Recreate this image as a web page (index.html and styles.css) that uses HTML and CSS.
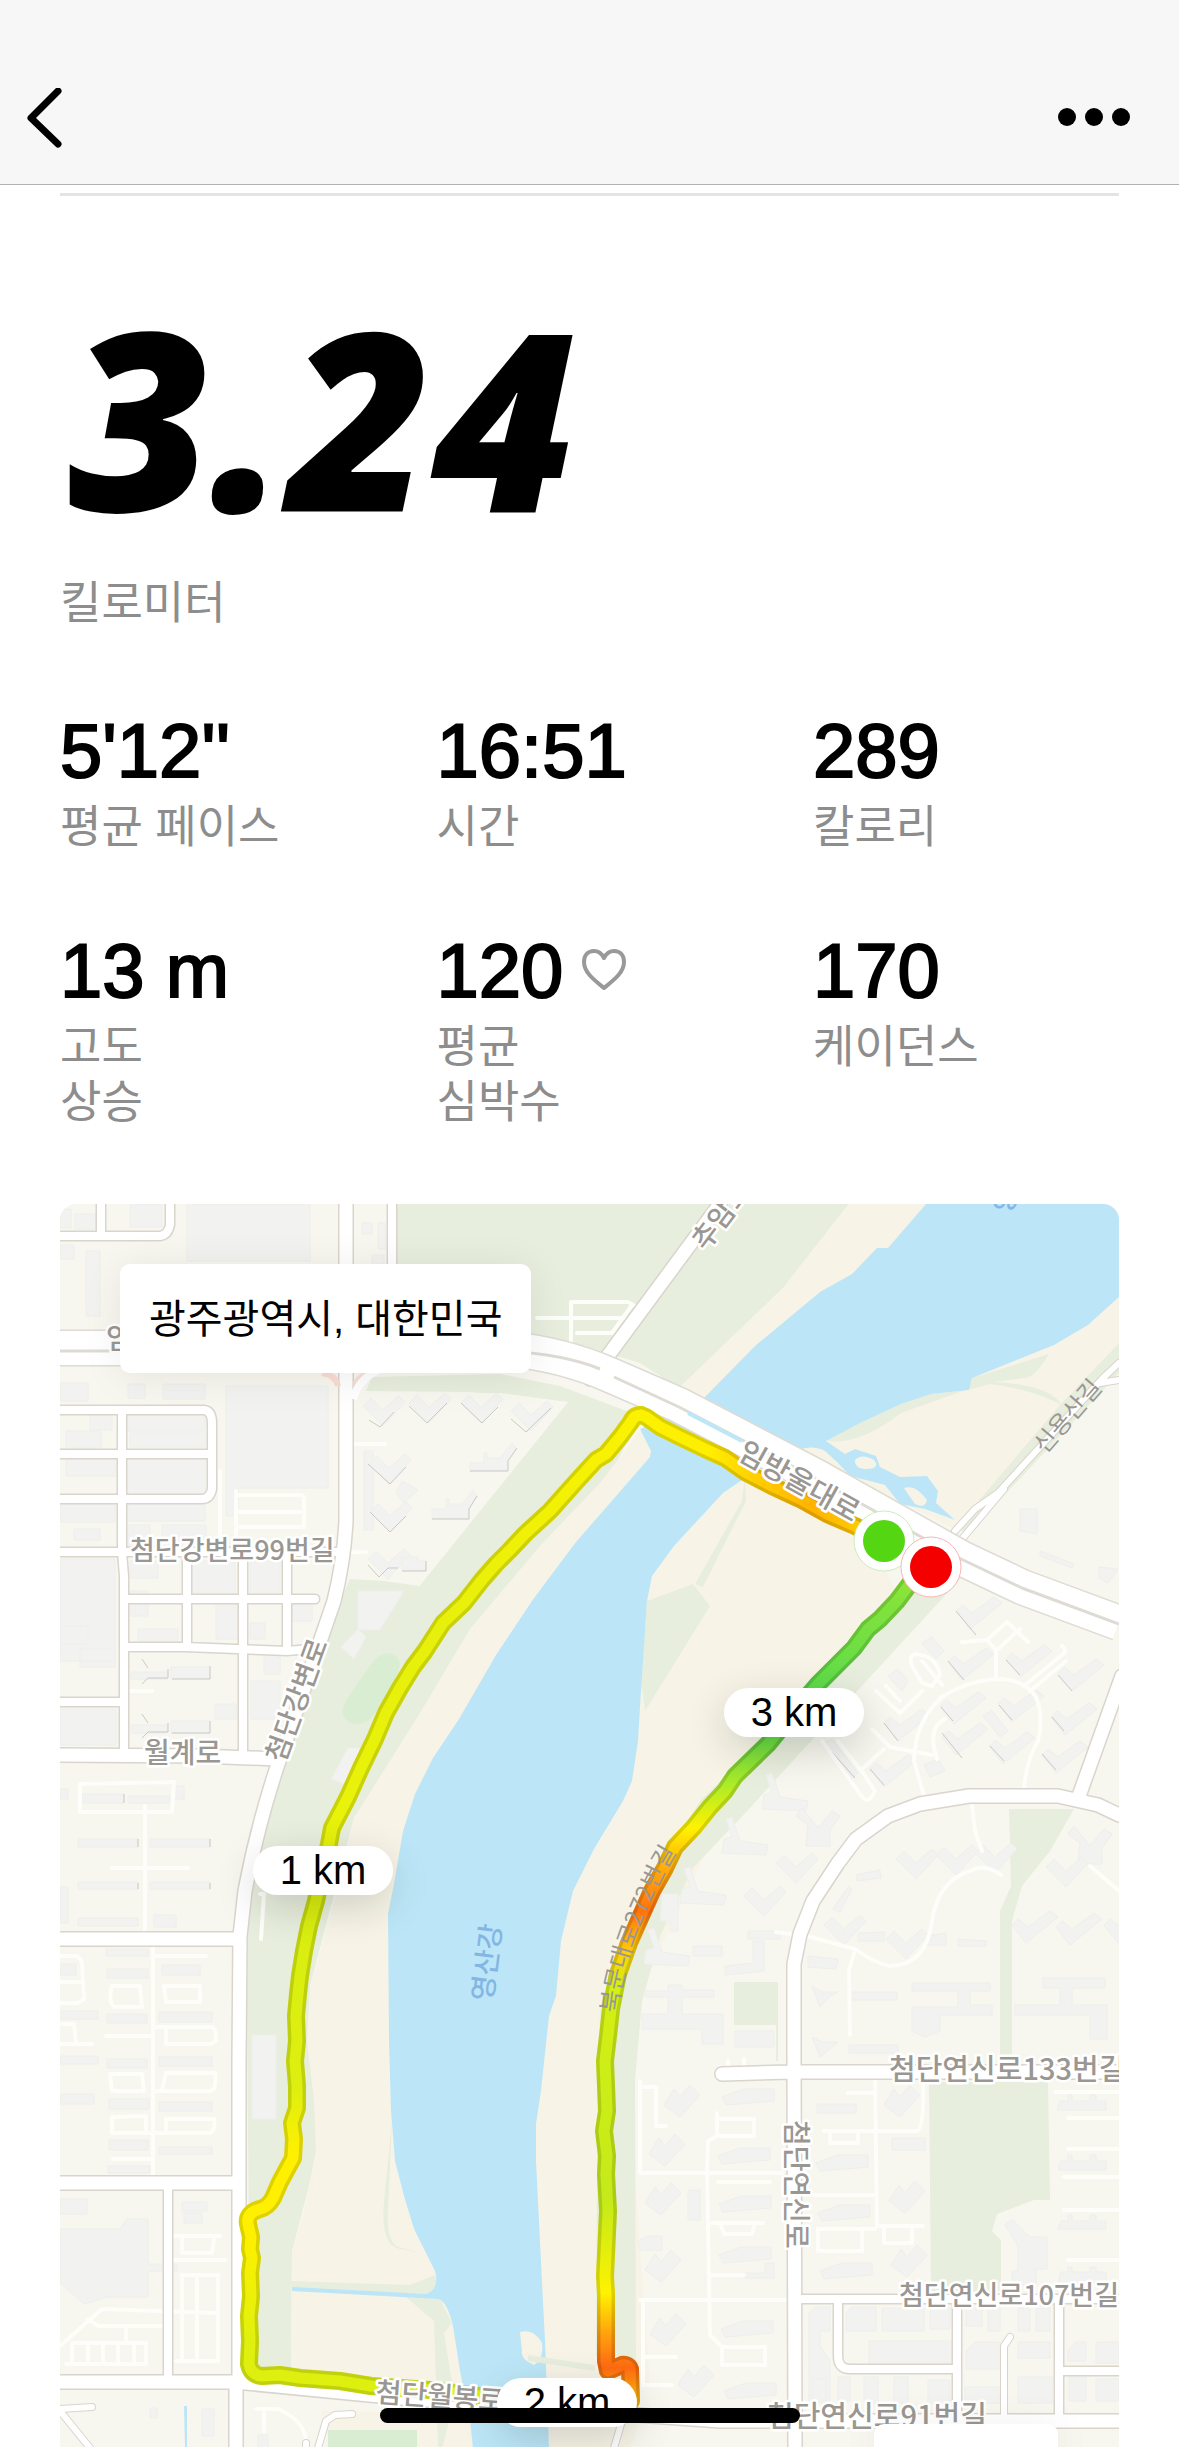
FILE: index.html
```html
<!DOCTYPE html>
<html lang="ko">
<head>
<meta charset="utf-8">
<meta name="viewport" content="width=device-width">
<title>러닝 기록</title>
<link rel="stylesheet" href="styles.css">
</head>
<body>
<header class="topbar">
  <button class="icon-button" type="button" aria-label="뒤로">
    <svg width="36" height="60" viewBox="0 0 36 60"><path d="M32 3 5 30 32 56" fill="none" stroke="#000" stroke-width="7" stroke-linecap="round" stroke-linejoin="round"/></svg>
  </button>
  <button class="icon-button" type="button" aria-label="더 보기">
    <svg width="74" height="20" viewBox="0 0 74 20"><circle cx="10" cy="9" r="9"/><circle cx="37" cy="9" r="9"/><circle cx="64" cy="9" r="9"/></svg>
  </button>
</header>
<main class="page">
  <section class="summary">
    <p class="distance">3.24</p>
    <p class="label">킬로미터</p>
  </section>
  <dl class="stats">
    <div class="stat"><dd class="value">5'12''</dd><dt class="label">평균 페이스</dt></div>
    <div class="stat"><dd class="value">16:51</dd><dt class="label">시간</dt></div>
    <div class="stat"><dd class="value">289</dd><dt class="label">칼로리</dt></div>
    <div class="stat"><dd class="value">13 m</dd><dt class="label">고도<br>상승</dt></div>
    <div class="stat"><dd class="value">120
      <svg class="heart" width="46" height="44" viewBox="0 0 46 44"><path d="M23 39C12 30 3 23 3 13 3 6 7 2 13 2c5 0 8 3 10 7 2-4 5-7 10-7 6 0 10 4 10 11 0 10-9 17-20 26z" fill="none" stroke="#999" stroke-width="4" stroke-linejoin="round"/></svg></dd><dt class="label">평균<br>심박수</dt></div>
    <div class="stat"><dd class="value">170</dd><dt class="label">케이던스</dt></div>
  </dl>
  <section class="map" aria-label="경로 지도">
    <svg class="map-canvas" viewBox="60 1203 1059 1244">
      <defs>
        <linearGradient id="g1" gradientUnits="userSpaceOnUse" x1="640" y1="0" x2="870" y2="0"><stop offset="0" stop-color="#fbf200"/><stop offset=".3" stop-color="#ffee00"/><stop offset=".5" stop-color="#ffcf00"/><stop offset=".75" stop-color="#ffb400"/><stop offset="1" stop-color="#ffcf00"/></linearGradient>
        <linearGradient id="g2" gradientUnits="userSpaceOnUse" x1="0" y1="1414" x2="0" y2="2400"><stop offset="0" stop-color="#fbf200"/><stop offset=".22" stop-color="#e6f00c"/><stop offset=".4" stop-color="#e9f20a"/><stop offset=".5" stop-color="#d9ee10"/><stop offset=".68" stop-color="#dcef10"/><stop offset=".75" stop-color="#fff000"/><stop offset=".83" stop-color="#fff000"/><stop offset=".94" stop-color="#e0f00e"/><stop offset="1" stop-color="#dcef10"/></linearGradient>
        <linearGradient id="g3" gradientUnits="userSpaceOnUse" x1="0" y1="1570" x2="0" y2="2400"><stop offset="0" stop-color="#90e636"/><stop offset=".14" stop-color="#5edb4a"/><stop offset=".2" stop-color="#62d745"/><stop offset=".26" stop-color="#b0ec26"/><stop offset=".31" stop-color="#fff200"/><stop offset=".36" stop-color="#ffaa0c"/><stop offset=".41" stop-color="#ff720e"/><stop offset=".46" stop-color="#ffd008"/><stop offset=".5" stop-color="#d4f014"/><stop offset=".76" stop-color="#c4ea1a"/><stop offset=".87" stop-color="#fff200"/><stop offset=".92" stop-color="#ffa00e"/><stop offset=".96" stop-color="#ff6a12"/><stop offset="1" stop-color="#ffc008"/></linearGradient>
        <path id="r1" d="M884 1540 855 1525 827 1513 800 1498 772 1485 745 1471 725 1457 705 1448 680 1436 660 1426 646 1416 641 1414"/>
        <path id="r2" d="M641 1414Q634 1414 631 1421L620 1436 606 1453 596 1459 575 1482 550 1510 525 1533 510 1549 496 1563 482 1579 464 1602 443 1622 425 1650 413 1666 400 1687 386 1712 375 1738 361 1767 348 1796 332 1827 329 1843 322 1872 316 1900 309 1925 304 1950 300 1975 298 1993 296 2015 297 2040 295 2060 297 2085 297 2107 292 2122 294 2138 293 2157 280 2181 273 2197Q268 2206 260 2208 246 2212 248 2223L251 2236 250 2248 252 2257 250 2272 251 2295 249 2315 250 2340 249 2363Q251 2374 262 2375L280 2374 300 2377 340 2380 371 2385 430 2389 479 2395 520 2400"/>
        <path id="r3" d="M631 2400 630 2368Q628 2363 622 2364L608 2370 606 2360 606 2293 605 2275 608 2210 606 2173 607 2155 604 2130 607 2110 605 2060 608 2035 611 2008 618 1973 629 1942 640 1917 652 1890 665 1867 675 1846 693 1827 710 1806 725 1790 735 1775 768 1743 795 1710 818 1683 834 1667 854 1647 868 1628 880 1618 897 1600 912 1580 930 1566"/>
        <path id="bird" d="M0 0 20 20 42-4 36-10 20 4 8-8z"/>
        <path id="fork" d="M0 0 12 9 10 30 34 30 34 14 44 0 36-5 22 12 6-8z"/>
        <path id="hut" d="M0 10 10-6 16 2 26-10 36 0 16 22z"/>
        <path id="bar" d="M0 2 22-6 52-6 52 6 4 10z"/>
        <path id="ell" d="M0 0 14 18 46-8 38-14 16 2 6-6z"/>
        <path id="stem" d="M0 0 6-2 14 22 42 26 40 36-4 34-2 20 6 18z"/>
        <path id="bookmun" d="M618 2012Q622 1970 644 1916T686 1838"/>
      </defs>
      <rect class="land" x="60" y="1203" width="1059" height="1244"/>

      <!-- parks and river banks -->
      <path class="green" d="M396 1203H849L783 1287 679 1387 640 1362 590 1347 531 1335H396zM365 1392 372 1376 500 1373 560 1385 640 1415 610 1475 560 1560 470 1640 354 1817 310 1985 318 2150 292 2250 291 2355 314 2368H250L247 2010 248 1900 262 1830 290 1750 340 1600 350 1578 422 1582 568 1401 500 1392z"/>
      <path class="sand" d="M849 1203H1119V1342L958 1530 790 1445 679 1387 783 1287zM640 1430 600 1482 540 1545 470 1628 420 1712 354 1817 338 1890 310 1985 307 2040 314 2100 316 2150 304 2210 292 2250 291 2370 460 2385 650 2385 630 2100 640 1990 730 1800 900 1600 870 1535 745 1470 700 1442z"/>
      <path class="sand" d="M330 2447 322 2410 470 2412 640 2420 630 2447z"/>
      <path class="green" d="M1119 1342 1060 1404 958 1524 966 1535 1119 1372zM972 1377 1049 1353Q1034 1378 1024 1377L995 1381Q1050 1384 1062 1404 1030 1388 990 1383L960 1391 901 1412Q860 1444 828 1440L827 1437 901 1403 931 1393 969 1389zM904 1600 931 1570 961 1577 940 1600 790 1763 750 1807 693 1867 661 1933 642 2000 635 2080 636 2360 622 2355 596 2355 597 2160 600 2010 640 1900 700 1800zM647 1600 693 1583 710 1605 645 1710 641 1680zM745 1475 742 1500 695 1583 703 1586 746 1500z"/>
      <path class="green" d="M734 1981H778V2060H776V2024H734zM1009 1808H1074L1050 1850 1022 1885 1012 1920 1012 2072H1000V1910L1011 1885zM929 2081H1048L1050 2199H1034L997 2213 992 2230 1001 2239V2290H931z"/>
      <path class="green" d="M291 2280 410 2284 435 2274 438 2288 426 2293 292 2290zM405 2295 440 2298 452 2322 444 2332 455 2400 442 2447 438 2447 434 2320zM392 2120 384 2200Q380 2245 400 2248L418 2251 398 2246Q386 2240 388 2210z"/>
      <path class="park" d="M372 1662Q385 1646 397 1656 404 1662 392 1684L377 1710Q362 1730 348 1720 338 1712 347 1698zM328 2429H417V2447H328z"/>
      <path class="land" d="M348 1575 420 1585 436 1560 568 1401 470 1391 360 1390z"/>

      <!-- river -->
      <path class="water" d="M926 1203 888 1247 877 1247 852 1273 820 1291 755 1345 701 1400 640 1428 651 1450 650 1456 610 1502 576 1541 543 1585 532 1600 496 1654 459 1718 433 1757 415 1793 403 1830 394 1883 388 1913 389 2040 391 2110 395 2160 404 2195 414 2228 435 2270Q440 2288 426 2293L292 2286V2290L438 2298Q447 2300 453 2325L460 2370 470 2420 473 2447H549L545 2340 536 2160 536 2123 541 2090 549 2015 556 1995 561 1940 573 1890 594 1848 623 1800 632 1780 638 1740 641 1690 647 1600 652 1575 674 1545 723 1492 745 1477 795 1450Q812 1443 825 1450L838 1462 850 1475 870 1480 885 1484 900 1503 925 1508 955 1519 936 1502 938 1490 927 1475 900 1476 880 1466 876 1455 855 1448 845 1453 826 1440 858 1423 901 1403 931 1393 969 1389 972 1377 1054 1344 1088 1324 1119 1296V1203zM184 2405H187V2447H185z"/>
      <path class="sand" d="M855 1459Q862 1452 874 1459 881 1468 865 1468 854 1467 855 1459zM904 1487Q916 1483 927 1499 925 1508 915 1503zM520 2331Q534 2327 542 2342 544 2358 534 2364 520 2358 522 2350z"/>
      <path class="green" d="M528 2354 595 2364 595 2370 528 2360z"/>

      <!-- building blocks -->
      <g class="buildings">
        <path d="M187 1203H310V1260H187zM226 1385H328V1487H238V1515H226zM60 1208H71V1227H60zM75 1213H96V1228H75zM130 1203H162V1226H130zM60 1244H74V1258H60zM86 1250H100V1315H86zM362 1222H372V1233H362zM378 1222H385V1248H378zM372 1254H384V1263H372zM60 1382H88V1400H60zM128 1383H145V1397H128zM163 1383H205V1398H163zM90 1414H112V1429H90zM66 1430H101V1447H66zM128 1414H205V1430H128zM130 1432H205V1446H130zM66 1458H116V1475H66zM128 1458H205V1494H128zM60 1503H115V1521H60zM74 1528H100V1539H74zM128 1503H205V1520H128zM128 1524H150V1546H128zM162 1524H206V1540H162zM60 1558H115V1660H60zM130 1560H158V1577H130zM130 1590H148V1615H130zM192 1560H235V1592H192zM250 1560H280V1594H250zM138 1628H178V1640H138zM216 1604H238V1638H216zM250 1622H265V1638H250zM292 1604H312V1620H292zM60 1625H88V1643H60zM80 1648H115V1666H80zM60 1708H116V1744H60zM251 1680H280V1718H251zM264 1656H280V1673H264zM215 1703H236V1718H215zM131 1671H167V1678H131zM171 1666H210V1677H171zM131 1724H167V1732H131zM171 1720H210V1732H171zM82 1793H124V1802H82zM128 1795H170V1802H128zM174 1785H184V1798H174zM60 1788H68V1798H60zM78 1838H138V1846H78zM150 1838H210V1846H150zM78 1881H138V1888H78zM150 1881H210V1888H150zM78 1917H138V1925H78zM154 1914H176V1926H154zM60 1886H68V1922H60zM106 1948H148V1955H106zM162 1964H200V1974H162zM107 1968H148V1977H107zM60 1963H76V1974H60zM60 2010H98V2018H60zM107 2013H147V2022H107zM159 2011H212V2021H159zM60 2055H98V2063H60zM107 2058H147V2067H107zM159 2056H212V2065H159zM60 2093H94V2103H60zM109 2098H149V2108H109zM159 2101H212V2110H159zM109 2139H148V2149H109zM159 2146H212V2153H159zM108 2165H150V2172H108zM182 2201H207V2210H182zM184 2212H202V2222H184zM60 2228H120L127 2218H148V2263H177V2270H148V2296H108L84 2303 60 2282zM60 2198H87V2213H60zM252 2034H276V2118H252zM202 2408H214V2435H202zM150 2407H157V2417H150zM258 2434H268V2447H258zM364 1450H373V1529H364zM358 1590H404L380 1629H358zM341 1646 358 1628 366 1636 354 1658zM331 1778 348 1747 360 1747 352 1782 344 1783z"/>
        <use href="#bird" x="363" y="1405"/><use href="#bird" x="409" y="1402"/><use href="#bird" x="461" y="1402"/><use href="#bird" x="511" y="1410"/><use href="#bird" x="369" y="1463"/><use href="#bird" x="370" y="1511"/><use href="#bird" x="368" y="1558"/>
        <path d="M470 1469H507V1460L516 1447 512 1442 500 1457H487V1452H484V1462H470zM432 1517H468V1508L477 1495 473 1490 462 1503H449V1498H446V1508H432zM402 1569H426V1560H418V1556H402zM402 1480 418 1489 404 1502 396 1492zM1020 1508H1037V1533L1020 1530zM1040 1550 1074 1563 1072 1567 1040 1555zM1099 1566 1118 1568 1108 1582 1099 1577z"/>
        <use href="#ell" x="956" y="1610"/><use href="#ell" x="948" y="1661"/><use href="#ell" x="1006" y="1658"/><use href="#ell" x="1058" y="1672"/><use href="#ell" x="940" y="1705"/><use href="#ell" x="998" y="1703"/><use href="#ell" x="1051" y="1716"/><use href="#ell" x="884" y="1722"/><use href="#ell" x="942" y="1736"/><use href="#ell" x="989" y="1745"/><use href="#ell" x="1042" y="1754"/><use href="#ell" x="870" y="1768"/>
        <path d="M922 1642 932 1636 944 1650 936 1658zM888 1675 898 1668 908 1680 902 1690zM822 1743 832 1738 858 1772 852 1778zM983 1715 992 1710 1008 1730 1000 1736zM924 1764 938 1758 945 1770 930 1776z"/>
        <use href="#stem" x="766" y="1774"/><use href="#stem" x="726" y="1818"/><use href="#stem" x="684" y="1868"/><use href="#stem" x="648" y="1929"/>
        <use href="#fork" x="796" y="1815"/><use href="#bird" x="776" y="1862"/><use href="#bird" x="744" y="1895"/><use href="#bird" x="896" y="1858"/><use href="#bird" x="936" y="1854"/><use href="#bird" x="975" y="1852"/><use href="#fork" x="1068" y="1833"/><use href="#bird" x="1046" y="1866"/><use href="#bird" x="824" y="1924"/><use href="#bird" x="886" y="1938"/><use href="#ell" x="1012" y="1924"/><use href="#ell" x="1056" y="1926"/><use href="#ell" x="1104" y="1924"/>
        <path d="M856 1874 880 1869 881 1877 857 1880zM833 1908 848 1886 852 1888 840 1911zM662 1893H678V1930H670V1920H660zM748 1930H780V1938H748zM858 1932 884 1931V1940H858zM927 1935 946 1932V1944H927zM958 1938 986 1940V1945H958zM693 1945H722V1955H693zM725 1965 753 1962V1940H764V1970L725 1974zM645 1990H668V1984H682V1989H714V1996H682V2013H723V2043H702V2028H642V2013H668V1996H645zM735 2030H774V2046H735zM808 1955 838 1958 836 1968 808 1966zM849 1991H897V1999H849zM912 1982H990V1990H970V2004H992V2014H940V2030L925 2036 912 2030V2006H958V1990H912zM1043 1977H1105V1987H1072V2004H1107V2038H1090V2014H1015V2004H1060V1987H1043zM812 1985 822 1991H838L830 1995 820 2006zM812 2036 822 2041H838L820 2056zM849 2044H898V2052H849z"/>
        <use href="#hut" x="664" y="2094"/><use href="#hut" x="649" y="2143"/><use href="#hut" x="645" y="2192"/><use href="#hut" x="645" y="2259"/><use href="#hut" x="650" y="2323"/><use href="#hut" x="678" y="2374"/><use href="#hut" x="884" y="2094"/><use href="#hut" x="889" y="2190"/><use href="#hut" x="891" y="2254"/>
        <use href="#bar" x="722" y="2094"/><use href="#bar" x="718" y="2153"/><use href="#bar" x="719" y="2201"/><use href="#bar" x="719" y="2252"/><use href="#bar" x="721" y="2326"/><use href="#bar" x="724" y="2388"/><use href="#bar" x="816" y="2160"/><use href="#bar" x="818" y="2210"/><use href="#bar" x="820" y="2268"/>
        <path d="M817 2103H856V2112H817zM892 2137H925V2149H892zM688 2189H700V2219H688zM637 2240 648 2235H662V2249H640zM745 2272H765V2262H774V2277H745zM1005 2224 1012 2218 1030 2236H1047V2268H1036V2284H1012V2270H1018V2245zM1057 2109 1060 2100H1068V2094H1072V2100H1090V2094H1096V2100H1106V2109zM1058 2169 1061 2160H1068V2154H1072V2160H1090V2154H1096V2160H1106V2169zM1058 2228 1061 2220H1068V2214H1072V2220H1090V2214H1096V2220H1106V2228zM1058 2282 1061 2271H1068V2266H1072V2271H1090V2266H1096V2271H1106V2282z"/>
        <path d="M809 2312 816 2306H830V2330H820V2345L830 2360V2400H809zM846 2312 852 2306H876V2330H846zM882 2307H924V2330H882zM930 2307H950V2328H930zM869 2340H952V2362H869zM812 2378H826V2402H812zM838 2376H850V2400H838zM864 2376H878V2402H864zM894 2376H908V2402H894zM928 2379H950V2402H928zM966 2307H982V2325H966zM988 2307H1000V2330H988zM1018 2307H1030V2330H1018zM1036 2307H1050V2330H1036zM966 2350 975 2341H1000V2368H966zM965 2386H1000V2402H965zM1018 2341H1050V2357H1018zM1018 2376H1052V2402H1018zM1068 2350 1076 2341H1086V2360H1068zM1096 2341H1119V2362H1096zM1069 2376H1086V2400H1069zM1096 2378H1119V2400H1096z"/>
      </g>
      <path class="building-shade" d="M369 1419 380 1426 394 1411M409 1405 427 1422 447 1402M461 1402 482 1422 498 1406M511 1418 526 1431 551 1407M470 1470H508V1460L517 1447M432 1518H469V1508L477 1495M368 1463 390 1483 406 1466M370 1511 390 1531 406 1515M368 1564 379 1576 388 1567H398M402 1570H426V1560M142 1658 148 1667M142 1683 148 1677H168V1668M210 1665V1678H172M142 1713 148 1722M142 1737 148 1731H168V1722M210 1720V1732H172M124 1793V1802M138 1838V1846M210 1838V1846M138 1882V1888M210 1882V1888M956 1610 976 1634M948 1660 964 1679M1006 1659 1020 1674M1058 1674 1072 1690M941 1706 953 1720M999 1704 1012 1719M1052 1716 1064 1730M884 1722 898 1740M942 1732 962 1757M990 1745 1004 1760M1042 1753 1056 1769M870 1768 884 1784M831 1750 855 1777"/>

      <!-- driveways -->
      <path class="lane" d="M571 1344V1301H628L640 1308M537 1317H624M577 1332H612L632 1304M220 1470V1550M236 1490V1548M238 1494H300Q305 1494 304 1500V1526H238M238 1511H300M354 1443H385M352 1551H366M131 1690H152M145 1805V1930M80 1811V1783L174 1781 172 1811H80M112 1867H188M60 1955H76Q82 1957 82 1963L84 1998 78 2002H60M60 1981H80M153 1945V2175M206 1955H153M112 1985H140L142 2006H114Q108 2000 112 1985M164 1985H200V2001H166zM106 2035H153M153 2026H212Q216 2026 216 2040L210 2043H166V2028M60 2023H74L76 2043H92H60M110 2073H142L144 2090H112zM153 2090H210Q217 2090 215 2072H166L162 2090M112 2132H210Q216 2128 214 2118H166V2132M112 2132V2116L146 2115V2132M113 2158H153M260 1893H264L261 1938M174 2235H220M182 2238V2252H212L214 2238M174 2259H225M182 2274H218V2360H176M182 2274V2358M197 2274V2358M60 2345 102 2308 216 2312M88 2318 98 2325H165M126 2326V2340M72 2342H146V2363H66M72 2342V2363M88 2342V2363M103 2342V2363M118 2342V2363M134 2342V2363M256 2408H278Q306 2420 306 2442M264 2412V2430"/>
      <path class="lane" d="M962 1641 987 1639 1007 1621 1028 1641M987 1639 996 1649V1678M1020 1628 996 1650M922 1660 942 1684M916 1653Q908 1655 912 1665L922 1682 932 1685 940 1674Q938 1660 925 1655zM1024 1685 1062 1654Q1068 1650 1062 1645M1030 1690 1066 1660M940 1697Q970 1678 1002 1678 1026 1680 1036 1696 1044 1715 1038 1740 1026 1760 1024 1788M945 1718Q930 1725 934 1747L937 1758M942 1696Q915 1720 914 1760L924 1795M872 1728 890 1746 932 1754M884 1748 862 1768M876 1690 900 1712 922 1690M886 1685 900 1700M822 1740 860 1793Q868 1806 875 1790L863 1772 838 1740M972 1804 975 1830 982 1850M1001 1874Q985 1862 970 1870 938 1880 932 1920 926 1965 890 1965 874 1962 855 1948L810 1936 776 1931M854 1952 849 1970 850 2034M1090 1865 1119 1890M640 2080V2172H782M640 2086H656V2125H666M717 2112V2135L708 2140 707 2170 710 2334 722 2346H765V2364H722V2348M717 2118H754V2135H717M710 2222H763M720 2222 724 2233H752L755 2222M710 2274H744M718 2181H770M640 2299H785M643 2300V2384H672M643 2356H676M875 2080 877 2225H923M848 2092H874M824 2130H917Q924 2128 923 2084M830 2132V2142H858V2132M815 2194H875M875 2228H818V2250H862V2228M884 2228V2242H912V2228M1055 2091H1119M1068 2117H1119M1068 2148H1119M1064 2176H1119M1064 2209H1119M1068 2259H1119M728 2060V2070M744 2058V2070"/>

      <!-- streets: casing first, then the white surface -->
      <defs>
        <path id="st10" d="M101 1203V1235M60 1235H160Q168 1234 170 1224V1203M60 1409H204Q212 1410 212 1422V1488Q210 1498 202 1498H60M60 1453H212M122 1409V1551L124 1575V1754M60 1551H338M187 1551V1645M243 1551V1754M287 1551V1645M124 1598H315M124 1646 185 1646 287 1650 310 1648M60 1701H122M392 1203V1275M168 2182V2381M838 2298V2355Q838 2368 850 2368H957M957 2298V2420M1059 2298V2420M1059 2370H1119M802 2298H1119"/>
        <path id="st7" d="M1004 2440V2345L1010 2336M60 2410 90 2447M60 2408 92 2406M306 2447V2442M318 2447 326 2420 335 2414 352 2413M614 2447 622 2420M955 1530 975 1508 998 1492 1102 1378 1119 1362M962 1538 1004 1488M1100 1382 1119 1379"/>
        <path id="st15" d="M346 1203V1520Q344 1560 334 1600L279 1760Q258 1822 245 1890L240 1935 239 2060V2381M60 1754 200 1755 278 1758M60 1938H240M60 2182H238M60 2381H235L400 2397 720 2420H1119M236 2384V2447M795 2447 794 2050V1963L800 1933 813 1900 838 1862 856 1838 888 1815 920 1803 969 1795H1058L1098 1804 1119 1814M722 2073 790 2071H1119M1079 1795 1122 1675M590 1378 610 1352 720 1203"/>
      </defs>
      <g class="casing"><use href="#st10" class="w10"/><use href="#st7" class="w7"/><use href="#st15" class="w15"/></g>
      <g class="surface"><use href="#st10" class="w10"/><use href="#st7" class="w7"/><use href="#st15" class="w15"/></g>
      <path d="M322 1372Q336 1374 338 1385M373 1372Q358 1374 355 1385" fill="none" stroke="#fbdcd2" stroke-width="6"/>
      <path d="M353 1398Q360 1374 386 1366" fill="none" stroke="#fff" stroke-width="8"/>

      <!-- boulevard -->
      <g fill="none" stroke-linejoin="round">
        <path d="M60 1347H500Q560 1352 610 1374L679 1404 815 1475 961 1557 1022 1586 1119 1622" stroke="#dedbd4" stroke-width="37"/>
        <path d="M60 1347H500Q560 1352 610 1374L679 1404 815 1475 961 1557 1022 1586 1119 1622" stroke="#fff" stroke-width="34"/>
        <path d="M60 1350H500Q560 1352 600 1368M614 1376 679 1406 815 1477 961 1558 1022 1587 1119 1623" stroke="#dedbd4" stroke-width="3"/>
        <path d="M688 1412 742 1440" stroke="#bde6f7" stroke-width="4"/>
      </g>

      <!-- run route -->
      <g class="route">
        <g class="route-edge"><use href="#r2" stroke="url(#g2)"/><use href="#r1" stroke="url(#g1)"/><use href="#r3" stroke="url(#g3)"/></g>
        <g class="route-shade"><use href="#r2"/><use href="#r1"/><use href="#r3"/></g>
        <g class="route-core"><use href="#r2" stroke="url(#g2)"/><use href="#r1" stroke="url(#g1)"/><use href="#r3" stroke="url(#g3)"/></g>
      </g>

      <!-- place names -->
      <g class="place">
        <text x="130" y="1559" font-size="27">첨단강변로99번길</text>
        <text x="144" y="1762" font-size="28">월계로</text>
        <text x="106" y="1348" font-size="28">임</text>
        <text transform="translate(284 1763) rotate(-70)" font-size="28">첨단강변로</text>
        <text transform="translate(736 1457) rotate(29)" font-size="29">임방울대로</text>
        <text transform="translate(706 1251) rotate(-53)" font-size="28">추암로</text>
        <text x="889" y="2079" font-size="29">첨단연신로133번길</text>
        <text x="899" y="2304" font-size="27">첨단연신로107번길</text>
        <text x="767" y="2426" font-size="29">첨단연신로91번길</text>
        <text transform="translate(786 2119) rotate(90)" font-size="28">첨단연신로</text>
        <text transform="translate(375 2401) rotate(4)" font-size="28">첨단월봉로</text>
      </g>
      <g class="place-thin">
        <text transform="translate(1045 1454) rotate(-49)" font-size="24">신용산길</text>
        <text font-size="24"><textPath href="#bookmun">북문대로272번길</textPath></text>
      </g>
      <g class="place-water">
        <text transform="translate(492 2001) rotate(-83)" font-size="28">영산강</text>
        <text transform="translate(1010 1214) rotate(-68)" font-size="26">영</text>
      </g>
      <circle cx="884" cy="1540" r="30" fill="#fff" stroke="#c9efb6"/><circle cx="884" cy="1540" r="21" fill="#55d613"/>
      <circle cx="931" cy="1566" r="30" fill="#fff" stroke="#fbb5b5"/><circle cx="931" cy="1566" r="21" fill="#f50000"/>
    </svg>
    <p class="location">광주광역시, 대한민국</p>
    <span class="marker km1">1 km</span>
    <span class="marker km2">2 km</span>
    <span class="marker km3">3 km</span>
    <div class="map-sheet"></div>
  </section>
</main>
<div class="home-indicator"></div>
</body>
</html>
```
FILE: styles.css
```css
* { box-sizing: border-box; }
body {
  margin: 0;
  background: #fff;
  color: #000;
  font-family: "Liberation Sans", "Noto Sans CJK KR", sans-serif;
}
p, dl, dd { margin: 0; }

.topbar {
  display: flex;
  justify-content: space-between;
  align-items: flex-end;
  padding: 88px 48px 36px 26px;
  background: #f7f7f7;
  border-bottom: 1px solid #b2b2b2;
}
.icon-button {
  display: flex;
  align-items: center;
  height: 60px;
  padding: 0;
  border: 0;
  background: none;
}

.page { padding: 8px 60px 0; }
.summary {
  padding-top: 88px;
  border-top: 3px solid #e4e4e4;
}
.distance {
  padding-left: 8px;
  font: italic 800 248px/264px "Open Sans", sans-serif;
}
.label {
  color: #8d8d8d;
  font-size: 45px;
  line-height: 55px;
}
.summary .label { padding-top: 28px; }

.stats {
  display: grid;
  grid-template-columns: 16fr 16fr 13fr;
  row-gap: 72px;
  margin-top: 76px;
}
.stat {
  display: flex;
  flex-direction: column;
}
.value {
  display: flex;
  align-items: center;
  gap: 18px;
  font-size: 76px;
  line-height: 88px;
  height: 88px;
  margin-bottom: 5px;
  -webkit-text-stroke: 2px #000;
}

.map {
  position: relative;
  margin-top: 74px;
  border-radius: 16px 16px 0 0;
  overflow: hidden;
}
.map-canvas { display: block; width: 100%; }

.land { fill: #f7f7ef; }
.green { fill: #e7eedd; }
.park { fill: #d9edd3; }
.sand { fill: #f7f4e7; }
.water { fill: #bce6f7; }
.buildings { fill: #f2f2f1; stroke: #eeeeeb; }
.building-shade { fill: none; stroke: #c9c9c7; stroke-width: 1px; }
.lane { fill: none; stroke: #fdfdf9; stroke-width: 4px; stroke-linejoin: round; stroke-linecap: round; }
.casing, .surface { fill: none; stroke-linejoin: round; stroke-linecap: round; }
.casing { stroke: #d9d5cd; }
.casing .w7 { stroke-width: 8px; }
.casing .w10 { stroke-width: 11px; }
.casing .w15 { stroke-width: 16px; }
.surface { stroke: #fff; }
.surface .w7 { stroke-width: 6px; }
.surface .w10 { stroke-width: 8px; }
.surface .w15 { stroke-width: 13px; }

.route { fill: none; stroke-linejoin: round; stroke-linecap: round; }
.route-edge { stroke-width: 18px; }
.route-shade { stroke: #000; stroke-width: 18px; opacity: .13; }
.route-core { stroke-width: 11px; }

.place, .place-thin, .place-water { font-family: "Noto Sans CJK KR", sans-serif; }
.place {
  fill: #9a9793;
  font-weight: 500;
  stroke: #fff;
  stroke-width: 5px;
  stroke-linejoin: round;
  paint-order: stroke;
}
.place-thin { fill: #9a9793; }
.place-water { fill: #84b6e4; font-weight: 500; }

.location {
  position: absolute;
  left: 60px;
  top: 60px;
  padding: 27px 29px 26px;
  border-radius: 10px;
  background: #fff;
  box-shadow: 0 4px 40px rgba(0, 0, 0, .08);
  font-size: 40px;
  line-height: 56px;
}
.marker {
  position: absolute;
  width: 140px;
  border-radius: 25px;
  background: #fff;
  box-shadow: 0 12px 40px rgba(0, 0, 0, .16);
  font-size: 40px;
  line-height: 49px;
  text-align: center;
}
.km1 { left: 193px; top: 642px; }
.km2 { left: 437px; top: 1174px; }
.km3 { left: 664px; top: 484px; }
.map-sheet {
  position: absolute;
  right: 61px;
  bottom: 0;
  width: 184px;
  height: 24px;
  border-radius: 10px 10px 0 0;
  background: #fff;
  box-shadow: 0 4px 40px rgba(0, 0, 0, .08);
}
.home-indicator {
  position: fixed;
  left: 50%;
  bottom: 24px;
  width: 420px;
  height: 15px;
  margin-left: -210px;
  border-radius: 8px;
  background: #000;
}
```
